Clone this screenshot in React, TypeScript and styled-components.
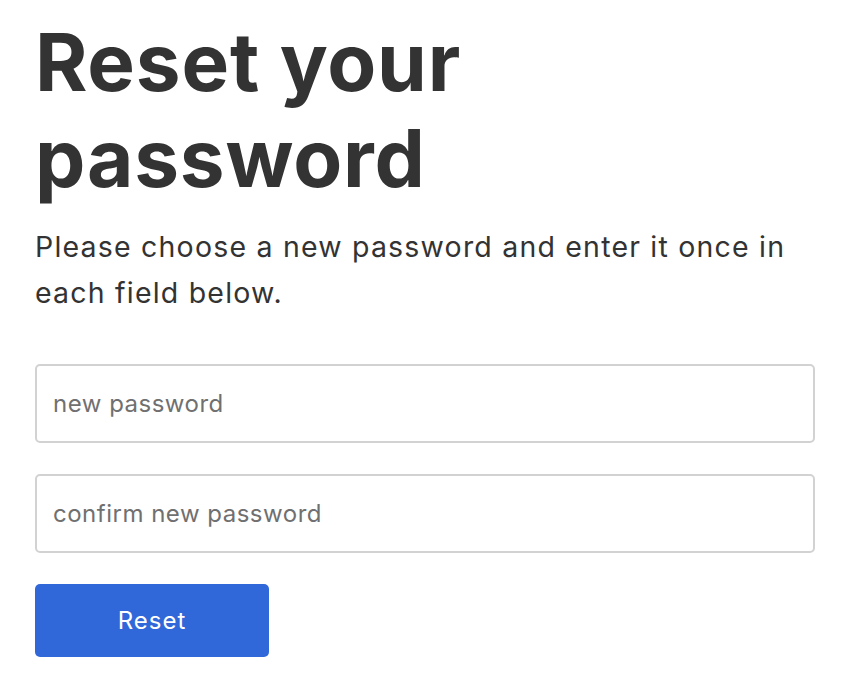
import React from "react";
import styled, { createGlobalStyle } from "styled-components";

const Global = createGlobalStyle`
  html, body { margin: 0; padding: 0; background: #fff; }
  body { font-family: Inter, "Helvetica Neue", Arial, sans-serif; color: #333; }
  * { box-sizing: border-box; }
`;

const Page = styled.main`
  padding: 14px 31px 0 35px;
  display: flex;
  flex-direction: column;
`;

const Title = styled.h1`
  margin: 0;
  font-size: 80px;
  line-height: 96px;
  font-weight: 700;
  letter-spacing: 0.8px;
  color: #333;
`;

const Lead = styled.p`
  margin: 18px 0 0;
  font-size: 28.5px;
  line-height: 46px;
  font-weight: 400;
  letter-spacing: 1.2px;
  color: #333;
`;

const Form = styled.form`
  margin-top: 48px;
  display: flex;
  flex-direction: column;
  gap: 31px;
  align-items: flex-start;
`;

const Field = styled.input`
  width: 780px;
  height: 79px;
  border: 2px solid #d2d2d2;
  border-radius: 5px;
  padding: 0 16px;
  font-family: inherit;
  font-size: 24px;
  letter-spacing: 0.5px;
  color: #333;
  outline: none;
  &::placeholder { color: #707070; }
`;

const Button = styled.button`
  width: 234px;
  height: 73px;
  border: none;
  border-radius: 5px;
  background: #3068d9;
  color: #fff;
  font-family: inherit;
  font-size: 24px;
  letter-spacing: 1px;
  cursor: pointer;
`;

export default function App() {
  return (
    <>
      <Global />
      <Page>
        <Title>Reset your<br />password</Title>
        <Lead>Please choose a new password and enter it once in each field below.</Lead>
        <Form onSubmit={(e) => e.preventDefault()}>
          <Field type="password" placeholder="new password" />
          <Field type="password" placeholder="confirm new password" />
          <Button type="submit">Reset</Button>
        </Form>
      </Page>
    </>
  );
}
